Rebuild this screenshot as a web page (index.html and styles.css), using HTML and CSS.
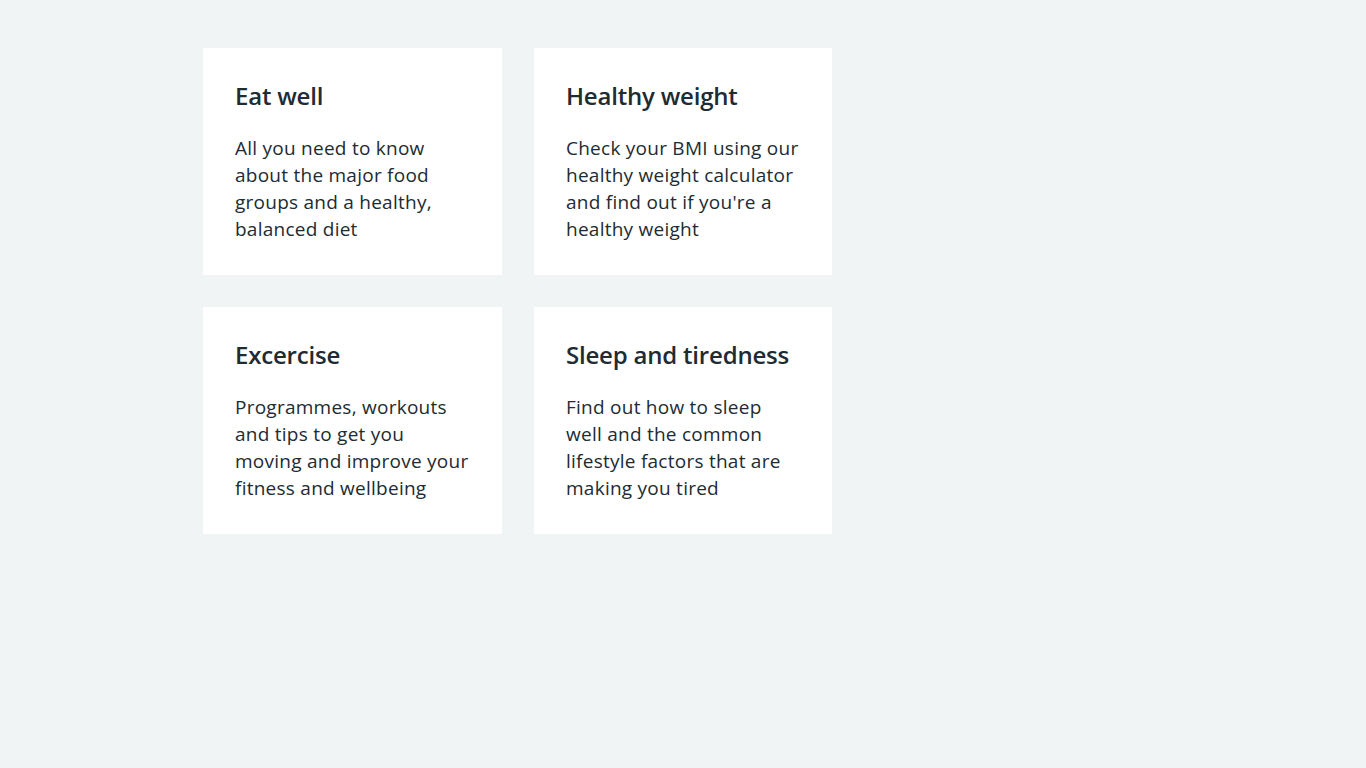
FILE: index.html
```html
<!DOCTYPE html>
<html lang="en">
<head>
<meta charset="utf-8">
<title>Health cards</title>
<link rel="stylesheet" href="styles.css">
</head>
<body>
<main class="container">
  <ul class="card-grid">
    <li class="card">
      <h2 class="card-heading">Eat well</h2>
      <p class="card-text">All you need to know about the major food groups and a healthy, balanced diet</p>
    </li>
    <li class="card">
      <h2 class="card-heading">Healthy weight</h2>
      <p class="card-text">Check your BMI using our healthy weight calculator and find out if you're a healthy weight</p>
    </li>
    <li class="card">
      <h2 class="card-heading">Excercise</h2>
      <p class="card-text">Programmes, workouts and tips to get you moving and improve your fitness and wellbeing</p>
    </li>
    <li class="card">
      <h2 class="card-heading">Sleep and tiredness</h2>
      <p class="card-text">Find out how to sleep well and the common lifestyle factors that are making you tired</p>
    </li>
  </ul>
</main>
</body>
</html>
```

FILE: styles.css
```css
html, body {
  margin: 0;
  padding: 0;
  background: #f0f4f5;
}
body {
  font-family: "Open Sans", "Noto Sans", Arial, sans-serif;
  color: #212b32;
  min-height: 768px;
}
.container {
  max-width: 960px;
  margin: 0 auto;
  padding-top: 48px;
}
.card-grid {
  list-style: none;
  margin: 0;
  padding: 0;
  display: grid;
  grid-template-columns: 299px 298px;
  column-gap: 32px;
  row-gap: 32px;
}
.card {
  background: #ffffff;
  padding: 32px;
}
.card-heading {
  margin: 0 0 23px;
  font-size: 24px;
  line-height: 32px;
  font-weight: 600;
  letter-spacing: -0.2px;
}
.card-text {
  margin: 0;
  font-size: 19px;
  line-height: 27px;
  font-weight: 400;
  letter-spacing: 0.25px;
}
```
